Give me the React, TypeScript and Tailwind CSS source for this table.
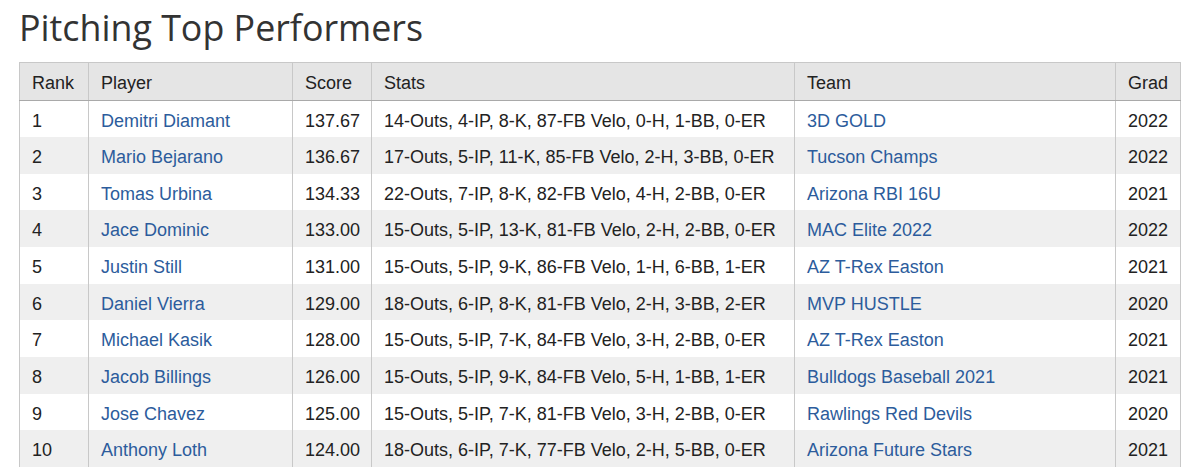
const rows = [
  { rank: 1, player: 'Demitri Diamant', score: '137.67', stats: '14-Outs, 4-IP, 8-K, 87-FB Velo, 0-H, 1-BB, 0-ER', team: '3D GOLD', grad: 2022 },
  { rank: 2, player: 'Mario Bejarano', score: '136.67', stats: '17-Outs, 5-IP, 11-K, 85-FB Velo, 2-H, 3-BB, 0-ER', team: 'Tucson Champs', grad: 2022 },
  { rank: 3, player: 'Tomas Urbina', score: '134.33', stats: '22-Outs, 7-IP, 8-K, 82-FB Velo, 4-H, 2-BB, 0-ER', team: 'Arizona RBI 16U', grad: 2021 },
  { rank: 4, player: 'Jace Dominic', score: '133.00', stats: '15-Outs, 5-IP, 13-K, 81-FB Velo, 2-H, 2-BB, 0-ER', team: 'MAC Elite 2022', grad: 2022 },
  { rank: 5, player: 'Justin Still', score: '131.00', stats: '15-Outs, 5-IP, 9-K, 86-FB Velo, 1-H, 6-BB, 1-ER', team: 'AZ T-Rex Easton', grad: 2021 },
  { rank: 6, player: 'Daniel Vierra', score: '129.00', stats: '18-Outs, 6-IP, 8-K, 81-FB Velo, 2-H, 3-BB, 2-ER', team: 'MVP HUSTLE', grad: 2020 },
  { rank: 7, player: 'Michael Kasik', score: '128.00', stats: '15-Outs, 5-IP, 7-K, 84-FB Velo, 3-H, 2-BB, 0-ER', team: 'AZ T-Rex Easton', grad: 2021 },
  { rank: 8, player: 'Jacob Billings', score: '126.00', stats: '15-Outs, 5-IP, 9-K, 84-FB Velo, 5-H, 1-BB, 1-ER', team: 'Bulldogs Baseball 2021', grad: 2021 },
  { rank: 9, player: 'Jose Chavez', score: '125.00', stats: '15-Outs, 5-IP, 7-K, 81-FB Velo, 3-H, 2-BB, 0-ER', team: 'Rawlings Red Devils', grad: 2020 },
  { rank: 10, player: 'Anthony Loth', score: '124.00', stats: '18-Outs, 6-IP, 7-K, 77-FB Velo, 2-H, 5-BB, 0-ER', team: 'Arizona Future Stars', grad: 2021 },
];

export default function App() {
  return (
    <div className="w-[1200px] h-[470px] overflow-hidden bg-white">
      <h1 className="pl-[19px] pt-[3px] h-[62px] text-[35.8px] leading-[48px] text-[#333] font-['Open_Sans',sans-serif]">
        Pitching Top Performers
      </h1>
      <table className="ml-[19px] w-[1161px] table-fixed border-collapse font-['Liberation_Sans',Arial,sans-serif] text-[18px] text-[#222]">
        <thead>
          <tr className="bg-[#e5e5e5] text-left">
            <th className="w-[69px] h-[38px] px-3 pt-[3px] font-normal border border-[#c8c8c8] border-b-[#a9a9a9]">Rank</th>
            <th className="w-[204px] px-3 pt-[3px] font-normal border border-[#c8c8c8] border-b-[#a9a9a9]">Player</th>
            <th className="w-[79px] px-3 pt-[3px] font-normal border border-[#c8c8c8] border-b-[#a9a9a9]">Score</th>
            <th className="w-[423px] px-3 pt-[3px] font-normal border border-[#c8c8c8] border-b-[#a9a9a9]">Stats</th>
            <th className="w-[321px] px-3 pt-[3px] font-normal border border-[#c8c8c8] border-b-[#a9a9a9]">Team</th>
            <th className="w-[65px] px-3 pt-[3px] font-normal border border-[#c8c8c8] border-b-[#a9a9a9]">Grad</th>
          </tr>
        </thead>
        <tbody>
          {rows.map((r, i) => (
            <tr key={r.rank} className={i % 2 === 0 ? 'bg-white' : 'bg-[#efefef]'}>
              <td className="h-[36.67px] px-3 pt-[4px] border-x border-[#c8c8c8]">{r.rank}</td>
              <td className="px-3 pt-[4px] border-x border-[#c8c8c8] text-[#2c5c9c]">{r.player}</td>
              <td className="px-3 pt-[4px] border-x border-[#c8c8c8]">{r.score}</td>
              <td className="px-3 pt-[4px] border-x border-[#c8c8c8] whitespace-nowrap">{r.stats}</td>
              <td className="px-3 pt-[4px] border-x border-[#c8c8c8] text-[#2c5c9c]">{r.team}</td>
              <td className="px-3 pt-[4px] border-x border-[#c8c8c8]">{r.grad}</td>
            </tr>
          ))}
        </tbody>
      </table>
    </div>
  );
}
